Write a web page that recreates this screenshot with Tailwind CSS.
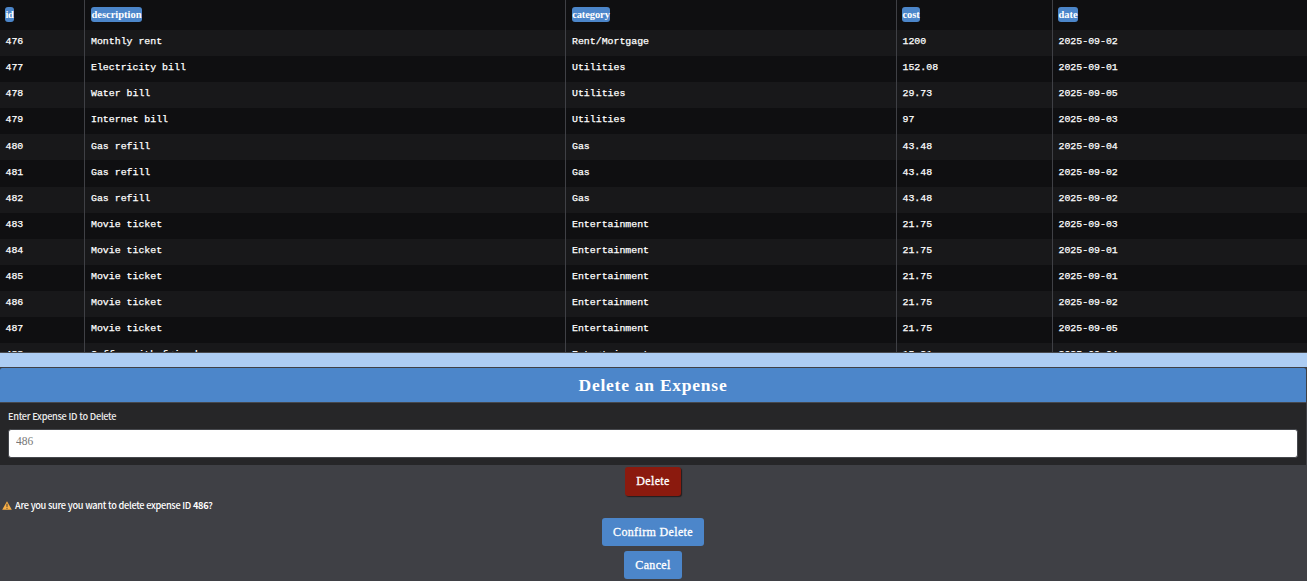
<!DOCTYPE html>
<html lang="en">
<head>
<meta charset="utf-8">
<title>Expenses</title>
<script src="https://cdn.jsdelivr.net/npm/@tailwindcss/browser@4"></script>
</head>
<body class="w-full h-[581px] overflow-hidden bg-[#3f4045] text-white font-['Liberation_Serif',serif]">
<div class="h-[353px] overflow-hidden border-b border-[#46484d] bg-[#0f0f11]">
  <table class="w-full table-fixed border-separate border-spacing-0">
    <colgroup><col class="w-[85px]"><col class="w-[481px]"><col class="w-[331px]"><col class="w-[156px]"><col></colgroup>
    <thead>
      <tr class="h-[30px] text-left text-[10.5px] leading-[15px] font-bold">
        <th class="p-0 pb-[2px] pl-[5px] border-r border-[#3f4045] align-middle"><span class="flex w-[9px] h-[15px] justify-center rounded-[3px] bg-[#4c86ca]"><span class="tracking-[-0.3px]">id</span></span></th>
        <th class="p-0 pb-[2px] pl-[6px] border-r border-[#3f4045] align-middle"><span class="flex w-[51px] h-[15px] justify-center rounded-[3px] bg-[#4c86ca]"><span>description</span></span></th>
        <th class="p-0 pb-[2px] pl-[6px] border-r border-[#3f4045] align-middle"><span class="flex w-[38px] h-[15px] justify-center rounded-[3px] bg-[#4c86ca]"><span class="tracking-[-0.1px]">category</span></span></th>
        <th class="p-0 pb-[2px] pl-[5px] border-r border-[#3f4045] align-middle"><span class="flex w-[18px] h-[15px] justify-center rounded-[3px] bg-[#4c86ca]"><span class="tracking-[-0.1px]">cost</span></span></th>
        <th class="p-0 pb-[2px] pl-[5px] align-middle"><span class="flex w-[20px] h-[15px] justify-center rounded-[3px] bg-[#4c86ca]"><span>date</span></span></th>
      </tr>
    </thead>
    <tbody id="rows" class="font-['Liberation_Mono',monospace] text-[9.9px] leading-[12px] [-webkit-text-stroke:0.25px_white]"></tbody>
  </table>
</div>
<div class="h-[14px] bg-[#adcdf3]"></div>
<section class="h-[98px] border-t border-r border-[#3f4045] rounded-t-[3px] bg-[#262628]">
  <h2 class="h-[35px] border-b border-[#46484d] rounded-t-[2px] bg-[#4c86ca] text-center text-[17.5px] leading-[35px] font-bold"><span class="tracking-[0.75px]">Delete an Expense</span></h2>
  <div class="px-2 pt-[6px]">
    <label for="eid" class="block h-[16px] text-[9.2px] leading-[14px] tracking-[-0.3px] [word-spacing:0.3px] font-medium font-['Noto_Sans_CJK_SC',sans-serif] text-[#ececec]"><span>Enter Expense ID to Delete</span></label>
    <input id="eid" placeholder="486" class="mt-[4px] block w-full h-[29px] rounded-[3px] border border-[#46484d] bg-white px-[7px] pb-[5px] text-[11.5px] placeholder:text-[#777777] outline-none">
  </div>
</section>
<div class="flex flex-col items-center pt-[2px] pr-px text-[12px] font-medium">
  <button class="w-[56px] h-[29px] rounded-[3px] bg-[#8b1a0e] shadow-[1px_1px_1px_#251c1c] pb-px tracking-[0.35px] [-webkit-text-stroke:0.3px_white]">Delete</button>
  <div class="flex w-full h-[22px] items-center pb-[4px] pl-[2px] text-[9.2px] leading-[14px] tracking-[-0.32px] [word-spacing:0.3px] font-medium font-['Noto_Sans_CJK_SC',sans-serif]">
    <svg class="w-[10px] h-[9px] mr-[3px] mt-px" viewBox="0 0 10 9"><path d="M5 .3 9.8 8.7H.2Z" fill="#f7ae45"/><path d="M5 2.7v3.2M5 6.8v1" stroke="#413a38" stroke-width="1"/></svg>
    <span>Are you sure you want to delete expense ID <b>486</b>?</span>
  </div>
  <button class="w-[102px] h-[28px] rounded-[3px] bg-[#4c86ca] tracking-[0.35px] [-webkit-text-stroke:0.3px_white]">Confirm Delete</button>
  <button class="mt-[5px] w-[58px] h-[28px] rounded-[3px] bg-[#4c86ca] tracking-[0.35px] [-webkit-text-stroke:0.3px_white]">Cancel</button>
</div>
<script>
const data = [
  [476,'Monthly rent','Rent/Mortgage','1200','2025-09-02'],
  [477,'Electricity bill','Utilities','152.08','2025-09-01'],
  [478,'Water bill','Utilities','29.73','2025-09-05'],
  [479,'Internet bill','Utilities','97','2025-09-03'],
  [480,'Gas refill','Gas','43.48','2025-09-04'],
  [481,'Gas refill','Gas','43.48','2025-09-02'],
  [482,'Gas refill','Gas','43.48','2025-09-02'],
  [483,'Movie ticket','Entertainment','21.75','2025-09-03'],
  [484,'Movie ticket','Entertainment','21.75','2025-09-01'],
  [485,'Movie ticket','Entertainment','21.75','2025-09-01'],
  [486,'Movie ticket','Entertainment','21.75','2025-09-02'],
  [487,'Movie ticket','Entertainment','21.75','2025-09-05'],
  [488,'Coffee with friends','Entertainment','15.21','2025-09-04']
];
const cell = ['pl-[5.5px] border-r','pl-[6px] border-r','pl-[6px] border-r','pl-[5.5px] border-r','pl-[5.5px]'];
document.getElementById('rows').innerHTML = data.map((r, i) =>
  `<tr class="h-[26.1px] ${i % 2 ? 'bg-[#0f0f11]' : 'bg-[#18181a]'}">` +
  r.map((v, j) => `<td class="pt-0 pb-[1.8px] pr-0 align-middle border-[#3f4045] whitespace-nowrap ${cell[j]}">${v}</td>`).join('') + '</tr>').join('');
</script>
</body>
</html>
